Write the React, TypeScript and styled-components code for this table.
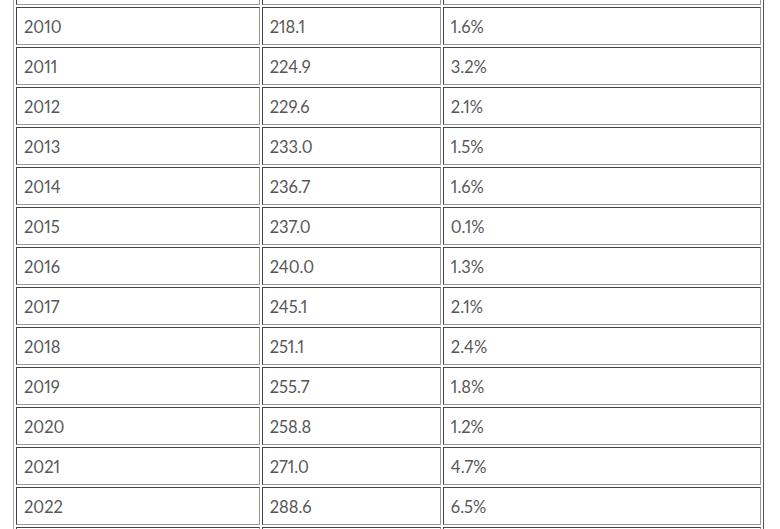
import React from "react";
import styled, { createGlobalStyle } from "styled-components";

const Global = createGlobalStyle`
  html, body { margin: 0; padding: 0; background: #ffffff; }
`;

const Viewport = styled.div`
  height: 529px;
  overflow: hidden;
  padding: 0 13px;
`;

const Table = styled.table`
  width: 751px;
  margin-top: -36px;
  border: 1px outset #a8a8a8;
  border-spacing: 2px;
  font-family: "Lato", "Liberation Sans", sans-serif;
  font-weight: 400;
  font-variant-numeric: proportional-nums;
  font-size: 16.5px;
  color: #575757;
`;

const Cell = styled.td<{ $w: number }>`
  width: ${(p) => p.$w}px;
  box-sizing: border-box;
  height: 38px;
  padding: 1px 7px 0;
  line-height: 18px;
  border: 1px inset #979797;
  text-align: left;
  vertical-align: middle;
`;

const rows: [string, string, string][] = [
  ["", "", ""],
  ["2010", "218.1", "1.6%"],
  ["2011", "224.9", "3.2%"],
  ["2012", "229.6", "2.1%"],
  ["2013", "233.0", "1.5%"],
  ["2014", "236.7", "1.6%"],
  ["2015", "237.0", "0.1%"],
  ["2016", "240.0", "1.3%"],
  ["2017", "245.1", "2.1%"],
  ["2018", "251.1", "2.4%"],
  ["2019", "255.7", "1.8%"],
  ["2020", "258.8", "1.2%"],
  ["2021", "271.0", "4.7%"],
  ["2022", "288.6", "6.5%"],
  ["", "", ""],
];

export default function App() {
  return (
    <>
      <Global />
      <Viewport>
        <Table>
          <tbody>
            {rows.map((r, i) => (
              <tr key={i}>
                <Cell $w={245}>{r[0]}</Cell>
                <Cell $w={180}>{r[1]}</Cell>
                <Cell $w={320}>{r[2]}</Cell>
              </tr>
            ))}
          </tbody>
        </Table>
      </Viewport>
    </>
  );
}
